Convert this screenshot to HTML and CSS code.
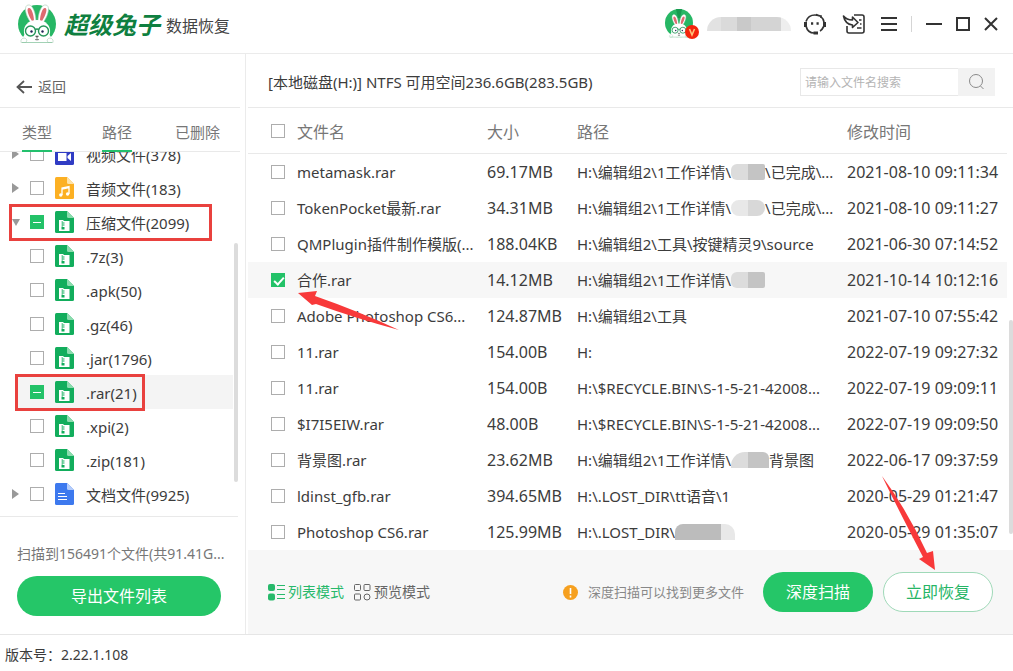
FILE: index.html
```
<!DOCTYPE html>
<html lang="zh-CN">
<head>
<meta charset="utf-8">
<title>超级兔子数据恢复</title>
<link rel="stylesheet" href="styles.css">
</head>
<body>
<svg class="defs" aria-hidden="true">
  <symbol id="rabbit" viewBox="0 0 40 40">
    <circle cx="20" cy="20" r="19" fill="#27b765"/>
    <path d="M4 36Q20 44 36 36L32 30H8Z" fill="#fff"/>
    <path d="M15 20C9 13 6 2 11 1c5-1 8 9 8 17ZM25 20c6-7 9-18 4-19-5-1-8 9-8 17Z" fill="#fff" stroke="#a9cdb5" stroke-width=".6"/>
    <path d="M15 17C11 11 9 4 12 4c3 0 5 8 5 13ZM25 17c4-6 6-13 3-13-3 0-5 8-5 13Z" fill="#df6a70"/>
    <path d="M20 16c9 0 14 6 13 13-1 6-6 9-13 9S8 35 7 29c-1-7 4-13 13-13Z" fill="#fff"/>
    <g fill="none" stroke="#27965a" stroke-width="1.4"><circle cx="13.500" cy="27" r="5"/><circle cx="26.500" cy="27" r="5"/><path d="M18 26q2-2 4 0"/></g>
    <circle cx="14.500" cy="27.500" r="1.200" fill="#225"/><circle cx="25.500" cy="27.500" r="1.200" fill="#225"/>
    <path d="M18.500 32h3l-1.500 1.500Zm1.500 1.500v2m-2 0q2 1 4 0" fill="#555" stroke="#555" stroke-width=".6"/>
    <path d="M4 36q3-4 6 0l-1 2.500H4ZM36 36q-3-4-6 0l1 2.500h5Z" fill="#fff" stroke="#a9cdb5" stroke-width=".6"/>
    <path d="M5 38.500h30" stroke="#8cc7a3" stroke-width=".8"/>
  </symbol>
  <symbol id="zip" viewBox="0 0 19 22">
    <path d="M1.500 0H12l7 7v13.500q0 1.500-1.500 1.500h-16Q0 22 0 20.500v-19Q0 0 1.500 0Z" fill="#12ad5c"/>
    <path d="M12 0l7 7h-5.500Q12 7 12 5.500Z" fill="#8bdcae"/>
    <path d="M4 9h4l1 1h5.500v10H4Z" fill="#fff"/>
    <path d="M6.500 10.500H8v1h1.500v1H8v1h1.500v1H8v1H6.500v-1h1.200v-1H6.500v-1h1.200v-1H6.500ZM6.500 16h3v2.500h-3Z" fill="#12ad5c"/>
  </symbol>
  <symbol id="video" viewBox="0 0 19 22">
    <path d="M1.500 0H12l7 7v13.500q0 1.500-1.500 1.500h-16Q0 22 0 20.500v-19Q0 0 1.500 0Z" fill="#303cc4"/>
    <path d="M12 0l7 7h-5.500Q12 7 12 5.500Z" fill="#a9aef0"/>
    <path d="M3 10h8.500v8H3ZM12.500 13L16 10v8l-3.500-3Z" fill="#fff"/>
  </symbol>
  <symbol id="audio" viewBox="0 0 19 22">
    <path d="M1.500 0H12l7 7v13.500q0 1.500-1.500 1.500h-16Q0 22 0 20.500v-19Q0 0 1.500 0Z" fill="#fcb023"/>
    <path d="M12 0l7 7h-5.500Q12 7 12 5.500Z" fill="#fee2a6"/>
    <path d="M7 18v-7l7-1.500V17M7 12l7-1.500" fill="none" stroke="#fff" stroke-width="1.300"/><circle cx="5.800" cy="18" r="1.700" fill="#fff"/><circle cx="12.600" cy="17" r="1.700" fill="#fff"/>
  </symbol>
  <symbol id="doc" viewBox="0 0 19 22">
    <path d="M1.500 0H12l7 7v13.500q0 1.500-1.500 1.500h-16Q0 22 0 20.500v-19Q0 0 1.500 0Z" fill="#3d79ee"/>
    <path d="M12 0l7 7h-5.500Q12 7 12 5.500Z" fill="#b5cdfb"/>
    <path d="M3 10.500h7M3 13.500h9M3 16.500h9" stroke="#fff" stroke-width="1.200"/>
  </symbol>
</svg>

<div class="app">
  <header class="topbar">
    <svg class="logo"><use href="#rabbit"/></svg>
    <h1 class="brand">超级兔子</h1>
    <span class="product">数据恢复</span>
    <div class="account">
      <svg class="avatar" viewBox="0 0 36 32"><circle cx="15" cy="15" r="14" fill="#27b765"/><svg x="3" y="6" width="24" height="24" viewBox="0 0 40 40"><use href="#rabbit"/></svg><path d="M12 1h6l-2 9h-2Z" fill="#189a50"/><circle cx="28" cy="24" r="7" fill="#f4240c"/><path d="M25.500 21l2.500 6 2.500-6" fill="none" stroke="#ffc27a" stroke-width="1.600"/></svg>
      <span class="username"></span>
    </div>
    <nav class="tools">
      <button class="tool" aria-label="客服"><svg width="24" height="24" viewBox="0 0 24 24" fill="none" stroke="#333" stroke-width="1.700"><path d="M3 9.500C4.500 5 8 3 12 3c4.500 0 8 2.500 9 7M3 14c1 4 4 7 8 7M21 14c-1 2-2 4-4 5M13 2.500q3 1.500 5 1.500v2"/><path d="M2.500 10v5M21.500 10v5" stroke-width="3"/><path d="M10.500 21H15" stroke-width="3"/><path d="M8 11.500h2.200M13.500 11.500h2.200" stroke-width="2.400"/></svg></button>
      <button class="tool" aria-label="导入"><svg width="24" height="24" viewBox="0 0 24 24" fill="none" stroke="#333" stroke-width="1.600" stroke-linejoin="round"><path d="M12 3h8q2 0 2 2v14q0 2-2 2H7q-2 0-2-2v-5M17 8h2.500M18 12h1.500M15 16h4.500"/><path d="M1.500 4q3 4 9 4V5l5.500 5.500-5.500 5V13Q3 12 1.500 4Z"/></svg></button>
      <button class="tool" aria-label="菜单"><svg width="16" height="16" viewBox="0 0 16 16" stroke="#333" stroke-width="2"><path d="M0 2h16M0 8h16M0 14h16"/></svg></button>
    </nav>
    <div class="window-controls">
      <button class="tool" aria-label="最小化"><svg width="16" height="16" viewBox="0 0 16 16" stroke="#333" stroke-width="2"><path d="M0 8h16"/></svg></button>
      <button class="tool" aria-label="最大化"><svg width="14" height="14" viewBox="0 0 14 14" fill="none" stroke="#333" stroke-width="2"><path d="M1 1h12v12H1Z"/></svg></button>
      <button class="tool" aria-label="关闭"><svg width="14" height="14" viewBox="0 0 14 14" stroke="#333" stroke-width="2"><path d="M1 1l12 12M13 1L1 13"/></svg></button>
    </div>
  </header>

  <div class="body">
    <aside class="sidebar">
      <button class="back"><svg width="16" height="14" viewBox="0 0 16 14" fill="none" stroke="#555" stroke-width="1.800"><path d="M8 1L1.500 7 8 13M1.500 7H16"/></svg>返回</button>
      <div class="tabs" role="tablist">
        <button class="tab active" role="tab">类型</button>
        <button class="tab active" role="tab">路径</button>
        <button class="tab" role="tab">已删除</button>
      </div>
      <div class="tree">
        <ul class="nodes">
          <li class="node"><i class="caret"></i><label class="pick"><input type="checkbox"><svg class="type"><use href="#video"/></svg><span class="label">视频文件(378)</span></label></li>
          <li class="node"><i class="caret"></i><label class="pick"><input type="checkbox"><svg class="type"><use href="#audio"/></svg><span class="label">音频文件(183)</span></label></li>
          <li class="node"><i class="caret open"></i><label class="pick"><input type="checkbox" class="partial"><svg class="type"><use href="#zip"/></svg><span class="label">压缩文件(2099)</span></label><span class="frame wide"></span></li>
          <li class="node"><i class="caret none"></i><label class="pick"><input type="checkbox"><svg class="type"><use href="#zip"/></svg><span class="label">.7z(3)</span></label></li>
          <li class="node"><i class="caret none"></i><label class="pick"><input type="checkbox"><svg class="type"><use href="#zip"/></svg><span class="label">.apk(50)</span></label></li>
          <li class="node"><i class="caret none"></i><label class="pick"><input type="checkbox"><svg class="type"><use href="#zip"/></svg><span class="label">.gz(46)</span></label></li>
          <li class="node"><i class="caret none"></i><label class="pick"><input type="checkbox"><svg class="type"><use href="#zip"/></svg><span class="label">.jar(1796)</span></label></li>
          <li class="node current"><i class="caret none"></i><label class="pick"><input type="checkbox" class="partial"><svg class="type"><use href="#zip"/></svg><span class="label">.rar(21)</span></label><span class="frame"></span></li>
          <li class="node"><i class="caret none"></i><label class="pick"><input type="checkbox"><svg class="type"><use href="#zip"/></svg><span class="label">.xpi(2)</span></label></li>
          <li class="node"><i class="caret none"></i><label class="pick"><input type="checkbox"><svg class="type"><use href="#zip"/></svg><span class="label">.zip(181)</span></label></li>
          <li class="node"><i class="caret"></i><label class="pick"><input type="checkbox"><svg class="type"><use href="#doc"/></svg><span class="label">文档文件(9925)</span></label></li>
        </ul>
        <span class="thumb tree-thumb"></span>
      </div>
      <div class="summary">
        <p class="scanned">扫描到156491个文件(共91.41G...</p>
        <button class="pill solid export">导出文件列表</button>
      </div>
    </aside>

    <main class="content">
      <div class="heading">
        <h2 class="volume">[本地磁盘(H:)] NTFS 可用空间236.6GB(283.5GB)</h2>
        <form class="search">
          <input class="query" type="text" aria-label="搜索" placeholder="请输入文件名搜索">
          <button class="go" type="button" aria-label="搜索"><svg width="18" height="18" viewBox="0 0 18 18" fill="none" stroke="#8a8a8a"><circle cx="8" cy="8" r="6.500"/><path d="M12.500 13l3 3"/></svg></button>
        </form>
      </div>
      <div class="files">
        <table class="grid">
          <colgroup><col class="c-pick"><col class="c-name"><col class="c-size"><col><col class="c-date"></colgroup>
          <thead><tr><th><input type="checkbox" aria-label="全选"></th><th>文件名</th><th>大小</th><th>路径</th><th>修改时间</th></tr></thead>
          <tbody>
            <tr><td><input type="checkbox" aria-label="metamask.rar"></td><td>metamask.rar</td><td class="num">69.17MB</td><td>H:\编辑组2\1工作详情\<span class="mask"></span>\已完成\...</td><td class="num">2021-08-10 09:11:34</td></tr>
            <tr><td><input type="checkbox" aria-label="TokenPocket最新.rar"></td><td>TokenPocket最新.rar</td><td class="num">34.31MB</td><td>H:\编辑组2\1工作详情\<span class="mask light"></span>\已完成\...</td><td class="num">2021-08-10 09:11:27</td></tr>
            <tr><td><input type="checkbox" aria-label="QMPlugin"></td><td>QMPlugin插件制作模版(...</td><td class="num">188.04KB</td><td>H:\编辑组2\工具\按键精灵9\source</td><td class="num">2021-06-30 07:14:52</td></tr>
            <tr class="selected"><td><input type="checkbox" checked aria-label="合作.rar"></td><td>合作.rar</td><td class="num">14.12MB</td><td>H:\编辑组2\1工作详情\<span class="mask"></span></td><td class="num">2021-10-14 10:12:16</td></tr>
            <tr><td><input type="checkbox" aria-label="Adobe Photoshop CS6"></td><td>Adobe Photoshop CS6...</td><td class="num">124.87MB</td><td>H:\编辑组2\工具</td><td class="num">2021-07-10 07:55:42</td></tr>
            <tr><td><input type="checkbox" aria-label="11.rar"></td><td>11.rar</td><td class="num">154.00B</td><td>H:</td><td class="num">2022-07-19 09:27:32</td></tr>
            <tr><td><input type="checkbox" aria-label="11.rar"></td><td>11.rar</td><td class="num">154.00B</td><td>H:\$RECYCLE.BIN\S-1-5-21-42008...</td><td class="num">2022-07-19 09:09:11</td></tr>
            <tr><td><input type="checkbox" aria-label="$I7I5EIW.rar"></td><td>$I7I5EIW.rar</td><td class="num">48.00B</td><td>H:\$RECYCLE.BIN\S-1-5-21-42008...</td><td class="num">2022-07-19 09:09:50</td></tr>
            <tr><td><input type="checkbox" aria-label="背景图.rar"></td><td>背景图.rar</td><td class="num">23.62MB</td><td>H:\编辑组2\1工作详情\<span class="mask hill"></span>背景图</td><td class="num">2022-06-17 09:37:59</td></tr>
            <tr><td><input type="checkbox" aria-label="ldinst_gfb.rar"></td><td>ldinst_gfb.rar</td><td class="num">394.65MB</td><td>H:\.LOST_DIR\tt语音\1</td><td class="num">2020-05-29 01:21:47</td></tr>
            <tr><td><input type="checkbox" aria-label="Photoshop CS6.rar"></td><td>Photoshop CS6.rar</td><td class="num">125.99MB</td><td>H:\.LOST_DIR\<span class="mask dark"></span></td><td class="num">2020-05-29 01:35:07</td></tr>
          </tbody>
        </table>
        <span class="thumb file-thumb"></span>
        <svg class="arrow arrow-pick" width="102" height="40" viewBox="0 0 102 40"><path d="M0 2L19 0 17 5Q60 20 101 39 60 28 18 13L14 14Z" fill="#f8393a"/></svg>
      </div>
      <div class="actions">
        <button class="mode on"><svg width="17" height="17" viewBox="0 0 17 17"><rect width="7" height="7" rx="2" fill="#27b96b"/><rect y="9.500" width="7" height="7" rx="2" fill="#27b96b"/><path d="M9 1.500h8M9 5.500h8M9 10.500h8M9 14.500h8" stroke="#27b96b"/></svg>列表模式</button>
        <button class="mode"><svg width="17" height="17" viewBox="0 0 17 17" fill="none" stroke="#666"><rect x=".5" y=".5" width="6" height="6" rx="1"/><rect x="10" y=".5" width="6" height="6" rx="1"/><rect x=".5" y="10" width="6" height="6" rx="1"/><circle cx="13" cy="13" r="3"/></svg>预览模式</button>
        <p class="hint"><svg width="15" height="15" viewBox="0 0 15 15"><circle cx="7.500" cy="7.500" r="7.500" fill="#f6a01f"/><path d="M7.500 3v6M7.500 10.500v2" stroke="#fff" stroke-width="1.600"/></svg>深度扫描可以找到更多文件</p>
        <button class="pill solid">深度扫描</button>
        <button class="pill outline">立即恢复</button>
        <svg class="arrow arrow-go" width="54" height="95" viewBox="0 0 54 95"><path d="M0 0Q25 34 45 77L51 75 53 94 37 83 41 81Q16 33 0 0Z" fill="#f8393a"/></svg>
      </div>
    </main>
  </div>

  <footer class="version">版本号：2.22.1.108</footer>
</div>
</body>
</html>
```
FILE: styles.css
```
* { box-sizing: border-box; }
body {
  margin: 0;
  background: #fff;
  color: #3c3c3c;
  font: 15px/20px "Noto Sans", "Noto Sans CJK SC", sans-serif;
}
h1, h2, p, ul { margin: 0; padding: 0; font-weight: normal; }
ul { list-style: none; }
button { border: 0; padding: 0; background: none; font: inherit; color: inherit; cursor: pointer; }
svg { display: block; flex: none; }
.defs { position: absolute; width: 0; height: 0; }
.app { display: flex; flex-direction: column; min-height: 100vh; }

input[type="checkbox"] {
  appearance: none;
  display: block;
  flex: none;
  width: 14px;
  height: 14px;
  margin: 0;
  border: 1px solid #adadad;
  background: #fff;
}
input[type="checkbox"].partial {
  border-color: #23c268;
  background: linear-gradient(#fff, #fff) center / 8px 1px no-repeat #23c268;
}
input[type="checkbox"]:checked { border-color: #23c268; background: #23c268; }
input[type="checkbox"]:checked::after {
  content: "";
  display: block;
  width: 4px;
  height: 8px;
  margin: 1px 4px;
  border: solid #fff;
  border-width: 0 2px 2px 0;
  transform: rotate(42deg);
}

.topbar { display: flex; align-items: center; height: 54px; padding: 0 15px 6px 17px; border-bottom: 1px solid #ebebeb; }
.logo { width: 40px; height: 40px; }
.brand { margin-left: 7px; color: #0f7f40; font: italic 700 24px/32px "Noto Sans CJK SC", sans-serif; }
.product { margin: 4px 0 0 6px; font-size: 16px; color: #444; }
.account { display: flex; align-items: center; gap: 7px; margin-left: auto; }
.avatar { width: 36px; height: 32px; }
.username {
  width: 84px;
  height: 14px;
  border-radius: 14px 14px 0 0;
  background: linear-gradient(90deg, #e2e2e2 0 14px, #dadada 14px 30px, #c9c9c9 30px 44px, #d4d4d4 44px 74px, #eee 74px);
}
.tools { display: flex; align-items: center; gap: 15px; margin-left: 12px; }
.tool + .tool { margin: 0; }
.window-controls { display: flex; align-items: center; gap: 14px; height: 16px; margin-left: 14px; padding-left: 14px; border-left: 1px solid #d5d5d5; }

.body { display: flex; flex: 1; }
.sidebar { display: flex; flex-direction: column; flex: none; width: 246px; border-right: 1px solid #ebebeb; }
.back { display: flex; align-items: center; gap: 6px; height: 54px; margin-right: 5px; padding: 12px 16px 0; border-bottom: 1px solid #e9e9e9; font-size: 14px; color: #666; }
.tabs { display: flex; height: 44px; margin-right: 5px; padding-left: 22px; border-bottom: 1px solid #e9e9e9; color: #777; }
.tab { height: 44px; padding-top: 6px; margin-right: 50px; border-bottom: 2px solid transparent; }
.tab:nth-child(2) { margin-right: 43px; }
.tab:last-child { margin-right: 0; }
.tab.active { border-color: #23c06d; }
.tree { position: relative; height: 365px; margin-right: 7px; overflow: hidden; border-bottom: 1px solid #e9e9e9; }
.nodes { margin: -15px 5px 0 0; }
.node { position: relative; display: flex; align-items: center; gap: 10px; height: 34px; padding-left: 12px; }
.node.current { background: linear-gradient(90deg, transparent 15px, #f4f4f4 15px); }
.caret { width: 8px; border: solid transparent; border-width: 5px 0 5px 7px; border-left-color: #999; }
.caret.open { border-width: 7px 4px 0; border-color: #999 transparent transparent; }
.caret.none { border-color: transparent; }
.pick { display: flex; align-items: center; }
.type { width: 19px; height: 22px; margin: 0 12px 0 11px; }
.label { padding-top: 2px; }
.frame { position: absolute; left: 15px; top: -1px; width: 130px; height: 37px; border: 3px solid #e9413e; }
.frame.wide { left: 9px; width: 203px; }
.thumb { position: absolute; right: 0; width: 4px; border-radius: 2px; background: #dcdcdc; }
.tree-thumb { top: 91px; height: 239px; }
.summary { padding: 27px 24px 18px 17px; }
.scanned { font-size: 14px; color: #777; white-space: nowrap; }
.pill { width: 110px; height: 40px; border-radius: 20px; font-size: 16px; }
.solid { background: #25c668; color: #fff; }
.outline { border: 1px solid #9fd9b8; background: #fff; color: #26b566; }
.export { width: 100%; margin-top: 12px; }

.content { display: flex; flex-direction: column; flex: 1; min-width: 0; padding-left: 2px; }
.heading { display: flex; align-items: center; justify-content: space-between; height: 54px; padding: 2px 18px 0 20px; border-bottom: 1px solid #e9e9e9; }
.volume { font-size: 15px; white-space: nowrap; }
.search { display: flex; width: 195px; height: 28px; }
.query { flex: 1; min-width: 0; padding: 2px 4px 0; border: 1px solid #e8e8e8; border-right: 0; font: 12px/20px "Noto Sans", "Noto Sans CJK SC", sans-serif; }
.query::placeholder { color: #b4b4b4; }
.go { display: grid; place-items: center; width: 37px; background: #f2f2f2; }
.files { position: relative; padding-right: 6px; }
.grid { width: 100%; table-layout: fixed; border-collapse: separate; border-spacing: 0; }
.c-pick { width: 49px; }
.c-name { width: 190px; }
.c-size { width: 90px; }
.c-date { width: 160px; }
th { height: 46px; padding: 2px 0 0; border-bottom: 1px solid #e9e9e9; text-align: left; font-size: 16px; font-weight: normal; color: #777; }
td { height: 36px; padding: 0; white-space: nowrap; }
th:first-child, td:first-child { padding: 0 0 0 23px; }
.num { font-size: 16px; }
.selected { background: #f7f7f7; }
.mask {
  display: inline-block;
  width: 34px;
  height: 16px;
  border-radius: 6px 2px 2px 6px;
  vertical-align: -2px;
  background: linear-gradient(90deg, #dcdcdc 0 17px, #c4c4c4 17px);
}
.mask.light { border-radius: 8px; background: linear-gradient(90deg, #e8e8e8 0 17px, #d8d8d8 17px); }
.mask.hill { width: 38px; border-radius: 14px 6px 0 0; }
.mask.dark { width: 60px; border-radius: 8px 10px 0 0; background: linear-gradient(90deg, #bcbcbc 0 46px, #e8e8e8 46px); }
.file-thumb { top: 212px; height: 214px; }
.arrow { position: absolute; pointer-events: none; }
.arrow-pick { left: 50px; top: 183px; }

.actions { position: relative; display: flex; align-items: center; flex: 1; padding: 0 20px; background: #f7f7f7; }
.mode { display: flex; align-items: center; gap: 3px; margin-right: 10px; font-size: 14px; color: #666; }
.mode.on { color: #27b96b; }
.hint { display: flex; align-items: center; gap: 10px; margin: 0 19px 0 auto; font-size: 13px; color: #888; white-space: nowrap; }
.outline { margin-left: 10px; }
.arrow-go { right: 77px; top: -74px; }

.version { height: 37px; padding: 10px 5px; border-top: 1px solid #e6e6e6; font-size: 14px; }
```
